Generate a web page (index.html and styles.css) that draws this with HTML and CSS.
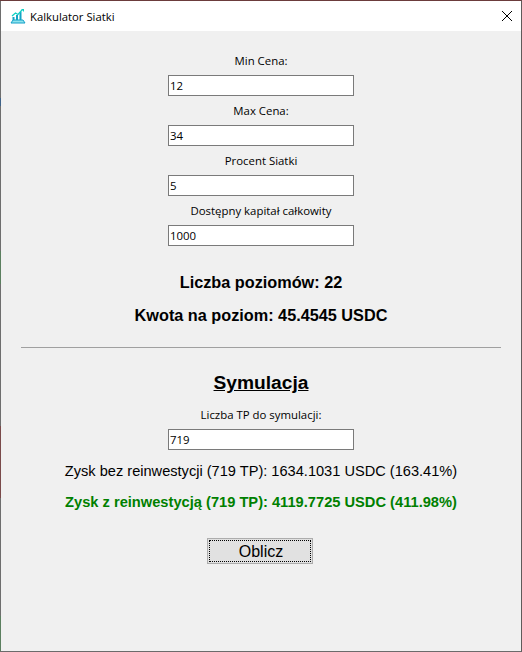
FILE: index.html
```html
<!DOCTYPE html>
<html lang="pl">
<head>
  <meta charset="UTF-8" />
  <title>Kalkulator Siatki</title>
  <link rel="stylesheet" href="styles.css">
</head>
<body>
  <div class="window">
    <!-- Title bar -->
    <div class="title-bar">
      <svg class="app-icon" width="16" height="16" viewBox="0 0 16 16" fill="none">
        <path d="M1 15h14l-2-3H3z" fill="#8fe4ee" stroke="#12a0c8" stroke-width="1"/>
        <path d="M3.500 12V9M7 12V7M10.500 12V4" stroke="#12a4c4" stroke-width="2"/>
        <path d="M2 8l3.500-3L8 6.500 12 2" stroke="#10d0c4" stroke-width="1.300"/>
        <path d="M11 1h3v3" fill="#10d0c4"/>
      </svg>
      <span class="title-text">Kalkulator Siatki</span>
      <svg class="close-icon" width="12" height="12" viewBox="0 0 12 12">
        <path d="M1 1l10 10M11 1L1 11" stroke="#000" stroke-width="1"/>
      </svg>
    </div>

    <div class="content">
      <label class="field-label">Min Cena:</label>
      <input class="entry" type="text" value="12">
      <label class="field-label">Max Cena:</label>
      <input class="entry" type="text" value="34">
      <label class="field-label">Procent Siatki</label>
      <input class="entry" type="text" value="5">
      <label class="field-label">Dostępny kapitał całkowity</label>
      <input class="entry" type="text" value="1000">

      <p class="result result-levels">Liczba poziomów: 22</p>
      <p class="result result-amount">Kwota na poziom: 45.4545 USDC</p>

      <hr class="divider">

      <h2 class="sim-title">Symulacja</h2>
      <label class="field-label tp-label">Liczba TP do symulacji:</label>
      <input class="entry" type="text" value="719">

      <p class="profit">Zysk bez reinwestycji (719 TP): 1634.1031 USDC (163.41%)</p>
      <p class="profit profit-green">Zysk z reinwestycją (719 TP): 4119.7725 USDC (411.98%)</p>

      <button class="btn">Oblicz</button>
    </div>
  </div>
</body>
</html>
```
FILE: styles.css
```css
html, body {
  margin: 0;
  height: 100%;
}

body {
  font-family: 'Open Sans', sans-serif;
  background-color: #f0f0f0;
}

.window {
  box-sizing: border-box;
  width: 522px;
  height: 652px;
  display: flex;
  flex-direction: column;
  padding-left: 1px;
  border-top: 1px solid #6b3b3b;
  border-right: 1px solid #5f5a5a;
  border-bottom: 1px solid #6b6b6b;
  background: linear-gradient(to bottom,
      #6e6e6e 97px, #3f6288 97px, #3f6288 105px, #6e6e6e 105px,
      #6e6e6e 250px, #5b7f5f 250px, #5b7f5f 283px, #6e6e6e 283px,
      #6e6e6e 425px, #7a4a4a 425px, #7a4a4a 497px, #6e6e6e 497px,
      #6e6e6e 615px, #5b7f5f 615px) left top / 1px 100% no-repeat #f0f0f0;
  overflow: hidden;
}

.title-bar {
  height: 30px;
  flex-shrink: 0;
  display: flex;
  align-items: center;
  padding: 0 8px 0 9px;
  background-color: white;
}

.app-icon {
  margin-right: 4px;
}

.title-text {
  font-size: 11.3px;
  color: #000;
  flex: 1;
}

.close-icon {
  display: block;
}

.content {
  display: flex;
  flex-direction: column;
  align-items: center;
  padding-top: 22px;
}

.field-label {
  height: 22px;
  line-height: 16px;
  font-size: 11.4px;
  color: #000;
}

.entry {
  box-sizing: border-box;
  width: 186px;
  height: 21px;
  margin: 0 0 7px 0;
  padding: 0 1px;
  border: 1px solid #7a7a7a;
  border-radius: 0;
  outline: none;
  background-color: white;
  font-family: 'Open Sans', sans-serif;
  font-size: 11.4px;
  color: #000;
}

.result {
  margin: 0;
  font-family: 'Liberation Sans', sans-serif;
  font-size: 16.25px;
  font-weight: bold;
  color: #000;
}

.result-levels {
  margin-top: 20px;
}

.result-amount {
  margin-top: 14px;
}

.divider {
  width: 480px;
  height: 1px;
  margin: 22px 0 0 0;
  border: none;
  background-color: #a0a0a0;
}

.sim-title {
  margin: 24px 0 0 0;
  font-family: 'Liberation Sans', sans-serif;
  font-size: 19.2px;
  font-weight: bold;
  text-decoration: underline;
  color: #000;
}

.tp-label {
  margin-top: 13px;
}

.profit {
  margin: 6px 0 0 0;
  font-family: 'Liberation Sans', sans-serif;
  font-size: 14.6px;
  color: #000;
}

.profit-green {
  margin-top: 15px;
  font-weight: bold;
  font-size: 14.67px;
  color: #008000;
}

.btn {
  box-sizing: border-box;
  width: 106px;
  height: 26px;
  margin: 28px 2px 0 0;
  padding: 2px 0 0 2px;
  border: 1px solid #adadad;
  outline: 1px dotted #000;
  outline-offset: -3px;
  background-color: #e1e1e1;
  font-family: 'Liberation Sans', sans-serif;
  font-size: 16px;
  color: #000;
}
```
